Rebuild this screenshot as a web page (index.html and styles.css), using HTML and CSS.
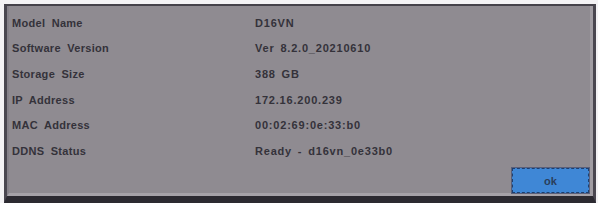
FILE: index.html
```html
<!DOCTYPE html>
<html>
<head>
<meta charset="utf-8">
<link rel="stylesheet" href="styles.css">
</head>
<body>
<div class="dialog">
  <div class="inner">
    <div class="rows">
      <div class="row"><span class="label">Model Name</span><span class="value">D16VN</span></div>
      <div class="row"><span class="label">Software Version</span><span class="value">Ver 8.2.0_20210610</span></div>
      <div class="row"><span class="label">Storage Size</span><span class="value">388 GB</span></div>
      <div class="row"><span class="label">IP Address</span><span class="value">172.16.200.239</span></div>
      <div class="row"><span class="label">MAC Address</span><span class="value">00:02:69:0e:33:b0</span></div>
      <div class="row"><span class="label">DDNS Status</span><span class="value">Ready - d16vn_0e33b0</span></div>
    </div>
    <div class="actions">
      <button class="ok">ok</button>
    </div>
  </div>
</div>
</body>
</html>
```
FILE: styles.css
```css
html, body {
  margin: 0;
  padding: 0;
  background: #f4f3f5;
}
body {
  width: 598px;
  height: 203px;
  overflow: hidden;
  font-family: "Liberation Sans", Arial, sans-serif;
}
.dialog {
  margin: 4px 2px 0 4px;
  height: 199px;
  box-sizing: border-box;
  border-top: 2px solid #45424a;
  border-left: 3px solid #4a4750;
  border-right: 3px solid #4a4750;
  border-bottom: 7px solid #2c2a31;
  background: #8f8b91;
}
.inner {
  height: 100%;
  box-sizing: border-box;
  border-right: 3px solid #a19da3;
  border-bottom: 3px solid #a6a2a8;
  border-left: 2px solid #86828a;
  display: flex;
  flex-direction: column;
}
.rows {
  padding-top: 4px;
  padding-left: 3px;
}
.row {
  display: flex;
  height: 25.6px;
  align-items: center;
  font-size: 11px;
  font-weight: bold;
  color: #34323a;
}
.label {
  width: 243px;
  letter-spacing: 0.3px;
  word-spacing: 3px;
}
.value {
  letter-spacing: 0.8px;
  word-spacing: 2px;
}
.actions {
  margin-top: auto;
  display: flex;
  justify-content: flex-end;
  padding: 0 1px 0 0;
}
.ok {
  width: 77px;
  height: 25px;
  box-sizing: border-box;
  background: #3f87d6;
  border: 1px dashed #1d3f6e;
  outline: 1px solid #5a5f7a;
  color: #2a3e5c;
  font-family: "Liberation Sans", Arial, sans-serif;
  font-size: 11px;
  font-weight: bold;
  padding: 0;
}
```
